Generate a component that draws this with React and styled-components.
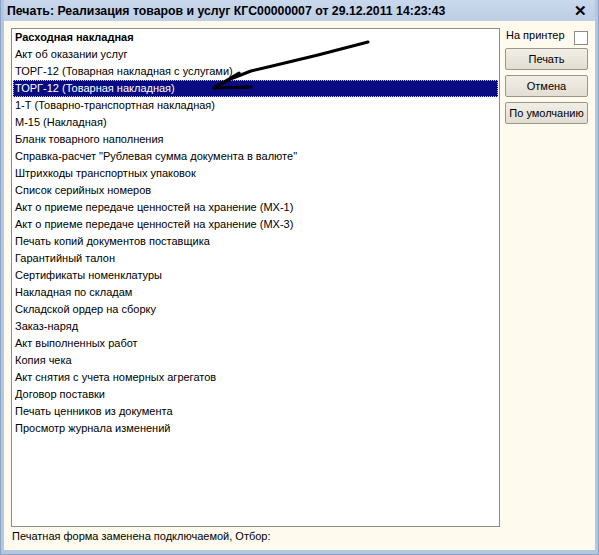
import React from 'react';
import styled, { createGlobalStyle } from 'styled-components';

const items = [
  'Расходная накладная',
  'Акт об оказании услуг',
  'ТОРГ-12 (Товарная накладная с услугами)',
  'ТОРГ-12 (Товарная накладная)',
  '1-Т (Товарно-транспортная накладная)',
  'М-15 (Накладная)',
  'Бланк товарного наполнения',
  'Справка-расчет "Рублевая сумма документа в валюте"',
  'Штрихкоды транспортных упаковок',
  'Список серийных номеров',
  'Акт о приеме передаче ценностей на хранение (МХ-1)',
  'Акт о приеме передаче ценностей на хранение (МХ-3)',
  'Печать копий документов поставщика',
  'Гарантийный талон',
  'Сертификаты номенклатуры',
  'Накладная по складам',
  'Складской ордер на сборку',
  'Заказ-наряд',
  'Акт выполненных работ',
  'Копия чека',
  'Акт снятия с учета номерных агрегатов',
  'Договор поставки',
  'Печать ценников из документа',
  'Просмотр журнала изменений',
];

const GlobalStyle = createGlobalStyle`
  html, body {
    margin: 0;
    padding: 0;
    background: #ffffff;
  }
  body {
    font-family: "Liberation Sans", Arial, sans-serif;
    font-size: 11px;
    color: #000;
  }
`;

const Window = styled.div`
  position: relative;
  width: 599px;
  height: 555px;
  box-sizing: border-box;
  display: flex;
  flex-direction: column;
  background: #b4c7e0;
  border: 1px solid #8aa3c6;
  border-top: none;
  padding: 0 3px 4px 3px;
`;

const TitleBar = styled.div`
  height: 21px;
  flex: none;
  display: flex;
  align-items: center;
  justify-content: space-between;
  padding: 0 8px 0 3px;
  background: linear-gradient(#c9d8ec, #bccde5);
  font-weight: bold;
  font-size: 12.3px;
`;

const CloseX = styled.span`
  font-size: 15px;
  font-weight: bold;
  line-height: 1;
  margin-top: -1px;
`;

const Client = styled.div`
  flex: 1;
  display: flex;
  flex-direction: column;
  background: #fefbee;
  padding: 7px 0 0 7px;
  min-height: 0;
`;

const Body = styled.div`
  flex: none;
  display: flex;
  gap: 5px;
`;

const ListBox = styled.div`
  width: 489px;
  height: 499px;
  box-sizing: border-box;
  background: #fff;
  border: 1px solid #8c8c8c;
`;

const Row = styled.div`
  height: 17px;
  line-height: 17px;
  padding-left: 2px;
  margin: 0 1px;
  white-space: nowrap;
  font-weight: ${(p) => (p.$bold ? 'bold' : 'normal')};
  background: ${(p) => (p.$selected ? '#0a0a82' : 'transparent')};
  color: ${(p) => (p.$selected ? '#fff' : '#000')};
  outline: ${(p) => (p.$selected ? '1px dotted #c8c8c8' : 'none')};
  outline-offset: -1px;
`;

const Side = styled.div`
  width: 83px;
  display: flex;
  flex-direction: column;
  gap: 5px;
`;

const PrinterRow = styled.label`
  display: flex;
  align-items: flex-start;
  justify-content: space-between;
  height: 15px;
  line-height: 15px;
  padding-left: 1px;
`;

const CheckBox = styled.span`
  width: 12px;
  height: 12px;
  margin-top: 3px;
  border: 1px solid #8a8a8a;
  background: #fff;
`;

const Button = styled.div`
  height: 22px;
  box-sizing: border-box;
  display: flex;
  align-items: center;
  justify-content: center;
  border: 1px solid #9a968c;
  border-radius: 2px;
  background: linear-gradient(#f1eee6, #e2ded2);
  white-space: nowrap;
`;

const Status = styled.div`
  margin-top: 2px;
  line-height: 14px;
  padding-left: 1px;
  white-space: nowrap;
`;

const ArrowSvg = styled.svg`
  position: absolute;
  left: 0;
  top: 0;
  pointer-events: none;
`;

const Arrow = () => (
  <ArrowSvg width="599" height="555" viewBox="0 0 599 555">
    <g fill="none" stroke="#000" strokeWidth="3" strokeLinecap="round" strokeLinejoin="round">
      <path d="M367 42 L340 49 L317 55 L292 61 L267 67 L250 71 L232 78 L214 87" />
      <path d="M238 73 L213 88" />
      <path d="M213 88 L250 87" />
    </g>
  </ArrowSvg>
);

export default function App() {
  return (
    <>
      <GlobalStyle />
      <Window>
        <TitleBar>
          <span>Печать: Реализация товаров и услуг КГС00000007 от 29.12.2011 14:23:43</span>
          <CloseX>✕</CloseX>
        </TitleBar>
        <Client>
          <Body>
            <ListBox>
              {items.map((t, i) => (
                <Row key={t} $bold={i === 0} $selected={i === 3}>
                  {t}
                </Row>
              ))}
            </ListBox>
            <Side>
              <PrinterRow>
                На принтер
                <CheckBox />
              </PrinterRow>
              <Button>Печать</Button>
              <Button>Отмена</Button>
              <Button>По умолчанию</Button>
            </Side>
          </Body>
          <Status>Печатная форма заменена подключаемой, Отбор:</Status>
        </Client>
        <Arrow />
      </Window>
    </>
  );
}
